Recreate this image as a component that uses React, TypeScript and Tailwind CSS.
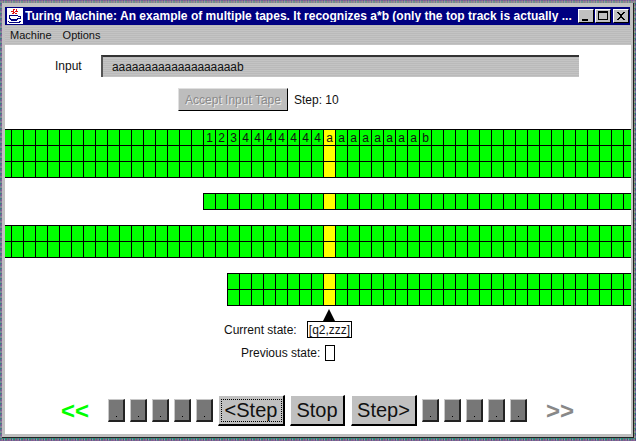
import React from "react";

const HEAD_COLUMN = 26;
const topText: Record<number, string> = {
  16: "1", 17: "2", 18: "3", 19: "4", 20: "4", 21: "4", 22: "4", 23: "4", 24: "4", 25: "4",
  26: "a", 27: "a", 28: "a", 29: "a", 30: "a", 31: "a", 32: "a", 33: "a", 34: "b",
};

function Tape({ rows, start, text }: { rows: number; start: number; text?: Record<number, string> }) {
  const cols = Array.from({ length: 54 - start }, (_, i) => start + i);
  return (
    <div className="w-[626px] overflow-hidden">
      <div className={start === -1 ? "flex w-max flex-col -ml-[6px]" : start === 16 ? "flex w-max flex-col ml-[198px]" : "flex w-max flex-col ml-[222px]"}>
        {Array.from({ length: rows }, (_, r) => (
          <div key={r} className={r === rows - 1 ? "flex border-b border-black" : "flex"}>
            {cols.map((c) => (
              <div
                key={c}
                className={
                  (c === HEAD_COLUMN ? "bg-[#ffff00]" : "bg-[#00ff00]") +
                  " box-border flex h-[16px] w-[12px] shrink-0 items-center justify-center border-l border-t border-black text-[12px] leading-none text-[#111]"
                }
              >
                {r === 0 && text ? text[c] : null}
              </div>
            ))}
          </div>
        ))}
      </div>
    </div>
  );
}

function Small({ className = "" }: { className?: string }) {
  return (
    <div className={"box-border flex h-[23px] w-[17px] shrink-0 items-end justify-center border-t border-l border-t-[#c8c8c8] border-l-[#c8c8c8] border-r-2 border-b-2 border-r-[#222] border-b-[#222] bg-[#777] pb-[3px] " + className}>
      <span className="h-px w-px bg-black" />
    </div>
  );
}

function JavaIcon() {
  return (
    <svg width="16" height="16" viewBox="0 0 16 16" className="shrink-0" shapeRendering="crispEdges">
      <rect width="16" height="16" fill="#fff" />
      <path d="M6 1h2v1H6zM9 1h1v1H9zM4 3h3v1H4zM8 3h3v1H8zM5 5h2v1H5zM8 5h2v1H8z" fill="#e01010" />
      <path d="M6 2h1v1H6zM9 2h1v2H9zM6 4h2v1H6z" fill="#e01010" />
      <path d="M2 7h9v1h3v3h-3v1h-1v1H4v-1H3v-1H2zM3 8v2h1v1h6v-1h1V8zM11 9v1h2V9z" fill="#000080" />
      <path d="M1 13h1v1h10v-1h2v1h-1v1H2v-1H1z" fill="#000080" />
    </svg>
  );
}

function WinButton({ children, className = "" }: { children: React.ReactNode; className?: string }) {
  return (
    <div className={"relative box-border h-[14px] w-[16px] shrink-0 border-t border-l border-t-white border-l-white border-r border-b border-r-black border-b-black bg-[#c0c0c0] " + className}>
      {children}
    </div>
  );
}

export default function App() {
  return (
    <div
      className="h-[441px] w-[636px] overflow-hidden bg-[#777] [background-image:repeating-linear-gradient(0deg,#8a5a9a99_0_1px,transparent_1px_2px,#2a8a7a99_2px_3px,#9a9a9a99_3px_5px),repeating-linear-gradient(90deg,#4a7a8a_0_1px,#8a5a9a_1px_2px,#8a9a6a_2px_3px,#3a4a9a_3px_4px,#9a9a9a_4px_5px,#2a8a7a_5px_7px,#a05a7a_7px_8px)] pt-[3px] pr-[2px] pb-[3px] pl-[2px] font-['Liberation_Sans',Arial,sans-serif]"
    >
      <div className="box-border flex h-[435px] w-[632px] flex-col border-r border-b border-[#222] bg-[#c0c0c0] pt-[4px] pr-[2px] pb-[3px] pl-[3px]">
        {/* title bar */}
        <div className="flex h-[18px] w-[625px] shrink-0 items-center bg-[#000080] pl-[2px] text-white">
          <JavaIcon />
          <div className="ml-[2px] w-[551px] overflow-hidden text-[12px] leading-none font-bold tracking-[0.02px] whitespace-nowrap">
            Turing Machine: An example of multiple tapes. It recognizes a*b (only the top track is actually ...
          </div>
          <WinButton className="ml-[2px]">
            <span className="absolute bottom-[1px] left-[3px] h-[2px] w-[6px] bg-black" />
          </WinButton>
          <WinButton className="ml-px">
            <span className="absolute top-[1px] left-[2px] h-[9px] w-[10px] border border-t-2 border-black" />
          </WinButton>
          <WinButton className="ml-[2px]">
            <svg width="14" height="12" viewBox="0 0 14 12" className="absolute top-0 left-0" shapeRendering="crispEdges">
              <path d="M3 2h2v1h1v1h2V3h1V2h2v1h-1v1H9v1H8v2h1v1h1v1h1v1H9V9H8V8H6v1H5v1H3V9h1V8h1V7h1V5H5V4H4V3H3z" fill="#000" />
            </svg>
          </WinButton>
        </div>
        {/* menu */}
        <div className="flex h-[20px] w-[626px] shrink-0 items-center gap-[11px] bg-[repeating-linear-gradient(0deg,#c4c4c4_0_1px,#bababa_1px_2px)] pl-[5px] text-[11px] text-[#111]">
          <span>Machine</span>
          <span>Options</span>
        </div>
        {/* content */}
        <div className="flex w-[626px] flex-1 flex-col bg-white text-[12px] text-[#111]">
          <div className="mt-[10px] flex h-[22px] items-center">
            <span className="ml-[50px] w-[46px]">Input</span>
            <div className="box-border flex h-[22px] w-[478px] items-center border-t-2 border-l-2 border-t-[#333] border-l-[#555] bg-[repeating-linear-gradient(0deg,#c4c4c4_0_1px,#bababa_1px_2px)] pl-[9px] text-[12px] tracking-[-0.1px]">
              aaaaaaaaaaaaaaaaaaab
            </div>
          </div>
          <div className="mt-[11px] flex h-[23px] items-center">
            <div className="ml-[173px] box-border flex h-[23px] w-[110px] items-center justify-center border-t border-l border-t-[#e0e0e0] border-l-[#e0e0e0] border-r border-b border-r-black border-b-black bg-[#bdbdbd] text-[#8a8a8a] [text-shadow:1px_1px_0_#eee]">
              Accept Input Tape
            </div>
            <span className="ml-[6px]">Step: 10</span>
          </div>
          <div className="mt-[18px]">
            <Tape rows={3} start={-1} text={topText} />
          </div>
          <div className="mt-[15px]">
            <Tape rows={1} start={16} />
          </div>
          <div className="mt-[15px]">
            <Tape rows={2} start={-1} />
          </div>
          <div className="mt-[15px]">
            <Tape rows={2} start={18} />
          </div>
          <svg width="12" height="12" viewBox="0 0 12 12" className="mt-[3px] ml-[318px] shrink-0">
            <path d="M6 0 12 12H0Z" fill="#000" />
          </svg>
          <div className="flex h-[17px] items-center">
            <span className="ml-[219px] w-[83px]">Current state:</span>
            <div className="box-border flex h-[17px] w-[45px] items-center justify-center border border-black">[q2,zzz]</div>
          </div>
          <div className="mt-[7px] flex h-[16px] items-center">
            <span className="ml-[236px] w-[84px]">Previous state:</span>
            <div className="box-border h-[16px] w-[10px] border border-black" />
          </div>
          <div className="mt-[34px] flex h-[31px] items-center text-[20px]">
            <span className="ml-[56px] w-[47px] text-[24px] leading-none font-bold text-[#00ff00]">&lt;&lt;</span>
            <Small />
            <Small className="ml-[5px]" />
            <Small className="ml-[5px]" />
            <Small className="ml-[5px]" />
            <Small className="ml-[5px]" />
            <div className="ml-[5px] box-border flex h-[31px] w-[67px] items-center justify-center border-t border-l border-t-white border-l-white border-r-2 border-b-2 border-r-black border-b-black bg-[#c0c0c0]">
              <span className="flex h-[23px] w-[61px] items-center justify-center border border-dotted border-black">&lt;Step</span>
            </div>
            <div className="ml-[5px] box-border flex h-[31px] w-[55px] items-center justify-center border-t border-l border-t-white border-l-white border-r-2 border-b-2 border-r-black border-b-black bg-[#c0c0c0]">
              Stop
            </div>
            <div className="ml-[6px] box-border flex h-[31px] w-[66px] items-center justify-center border-t border-l border-t-white border-l-white border-r-2 border-b-2 border-r-black border-b-black bg-[#c0c0c0]">
              Step&gt;
            </div>
            <Small className="ml-[5px]" />
            <Small className="ml-[5px]" />
            <Small className="ml-[5px]" />
            <Small className="ml-[5px]" />
            <Small className="ml-[5px]" />
            <span className="ml-[19px] text-[24px] leading-none font-bold text-[#888]">&gt;&gt;</span>
          </div>
        </div>
      </div>
    </div>
  );
}
